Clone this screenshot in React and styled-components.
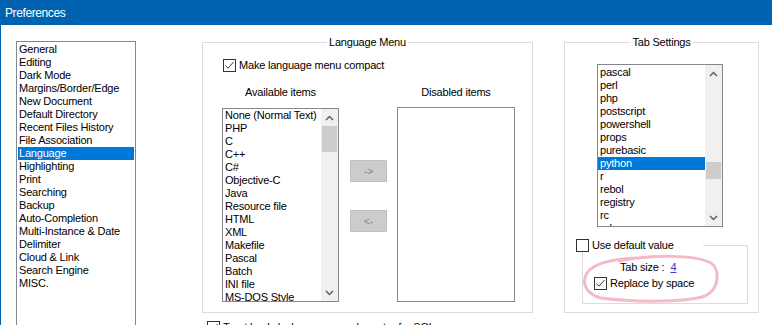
import React from 'react'
import styled, { createGlobalStyle } from 'styled-components'

const GlobalStyle = createGlobalStyle`
  html, body {
    margin: 0;
    padding: 0;
    background: #fff;
  }
  body {
    font-family: "Liberation Sans", Arial, sans-serif;
    font-size: 11px;
    letter-spacing: -0.2px;
    color: #000;
    overflow: hidden;
  }
`

const Window = styled.div`
  width: 772px;
  height: 325px;
  display: flex;
  flex-direction: column;
  overflow: hidden;
  background: #fff;
`

const TitleBar = styled.div`
  height: 25px;
  flex: none;
  box-sizing: border-box;
  background: #0063b1;
  color: #fff;
  font-size: 12px;
  letter-spacing: -0.4px;
  display: flex;
  align-items: center;
  padding-left: 5px;
`

const Body = styled.div`
  flex: 1;
  min-height: 0;
  border-left: 1px solid #0063b1;
  display: grid;
  grid-template-columns: 186px 362px 195px;
  grid-template-rows: auto 1fr;
  padding: 10px 0 0 15px;
`

const ListBox = styled.div`
  width: ${p => p.$w}px;
  height: ${p => p.$h}px;
  box-sizing: border-box;
  border: 1px solid #828790;
  background: #fff;
  display: flex;
  overflow: hidden;
  flex: none;
`

const CategoryBox = styled(ListBox)`
  grid-row: 1 / span 2;
  height: auto;
  align-self: stretch;
  margin: 6px 0 -20px;
`

const Items = styled.ul`
  flex: 1;
  min-width: 0;
  margin: 0;
  padding: ${p => p.$pad || '0'};
  list-style: none;
  overflow: hidden;
`

const Item = styled.li`
  height: 13px;
  line-height: 13px;
  padding-left: ${p => p.$indent || 2}px;
  white-space: nowrap;
  background: ${p => (p.$selected ? '#0078d7' : 'transparent')};
  color: ${p => (p.$selected ? '#fff' : '#000')};
`

const ScrollTrack = styled.div`
  width: 17px;
  flex: none;
  background: #f0f0f0;
  display: flex;
  flex-direction: column;
`

const ScrollArrow = styled.div`
  height: 17px;
  flex: none;
  display: flex;
  align-items: center;
  justify-content: center;
`

const ScrollSpace = styled.div`
  flex: ${p => (p.$fill ? 1 : 'none')};
  height: ${p => (p.$fill ? 'auto' : `${p.$h}px`)};
`

const Thumb = styled.div`
  flex: none;
  height: ${p => p.$h}px;
  margin: 0 1px;
  background: #cdcdcd;
`

const Group = styled.fieldset`
  margin: 0;
  min-width: 0;
  width: ${p => p.$w}px;
  box-sizing: border-box;
  border: 1px solid #dcdcdc;
  padding: 0;
  align-self: stretch;
`

const GroupInner = styled.div`
  padding: ${p => p.$pad};
`

const Legend = styled.legend`
  margin: 0 auto;
  padding: 0 2px;
  line-height: 14px;
  font-size: 11px;
`

const CheckRow = styled.label`
  display: flex;
  align-items: center;
  gap: ${p => p.$gap || 3}px;
  height: 13px;
  line-height: 13px;
  margin: ${p => p.$m || '0'};
  white-space: nowrap;
`

const Box = styled.span`
  width: 13px;
  height: 13px;
  box-sizing: border-box;
  border: 1px solid #333;
  background: #fff;
  display: inline-flex;
  align-items: center;
  justify-content: center;
  flex: none;
`

const ListsGrid = styled.div`
  display: grid;
  grid-template-columns: 128px 47px 118px;
  grid-template-rows: 13px auto;
  row-gap: 9px;
  margin-top: 14px;
`

const ColumnLabel = styled.div`
  line-height: 13px;
  text-align: center;
  width: ${p => p.$w}px;
  grid-column: ${p => p.$col};
  white-space: nowrap;
`

const ArrowColumn = styled.div`
  grid-column: 2;
  display: flex;
  flex-direction: column;
  gap: 28px;
  padding-top: 52px;
`

const MoveButton = styled.div`
  width: 37px;
  height: 22px;
  box-sizing: border-box;
  background: #cccccc;
  border: 1px solid #bfbfbf;
  color: #838383;
  font-size: 10px;
  display: flex;
  align-items: center;
  justify-content: center;
`

const DisabledList = styled(ListBox)`
  grid-column: 3;
  margin-top: -1px;
`

const TabList = styled(ListBox)`
  margin-left: 32px;
`

const SubGroup = styled.fieldset`
  margin: 12px 0 0 17px;
  padding: 9px 0 13px 0;
  width: 166px;
  min-width: 0;
  box-sizing: border-box;
  border: 1px solid #dcdcdc;
`

const SubLegend = styled.legend`
  margin-left: -7px;
  padding: 0;
  width: 127px;
  background: #fff;
`

const Annotated = styled.div`
  position: relative;
`

const TabSizeRow = styled.div`
  height: 13px;
  line-height: 13px;
  padding-left: 37px;
  white-space: nowrap;
`

const SizeLink = styled.span`
  margin-left: 6px;
  color: #3b3bd0;
  text-decoration: underline;
`

const Scribble = styled.svg`
  position: absolute;
  left: -4px;
  top: -8px;
  pointer-events: none;
  overflow: visible;
`

const BottomRow = styled.div`
  grid-column: 2;
  grid-row: 2;
`

const categories = [
  'General', 'Editing', 'Dark Mode', 'Margins/Border/Edge', 'New Document',
  'Default Directory', 'Recent Files History', 'File Association', 'Language',
  'Highlighting', 'Print', 'Searching', 'Backup', 'Auto-Completion',
  'Multi-Instance & Date', 'Delimiter', 'Cloud & Link', 'Search Engine', 'MISC.'
]

const available = [
  'None (Normal Text)', 'PHP', 'C', 'C++', 'C#', 'Objective-C', 'Java',
  'Resource file', 'HTML', 'XML', 'Makefile', 'Pascal', 'Batch', 'INI file',
  'MS-DOS Style'
]

const tabLangs = [
  'pascal', 'perl', 'php', 'postscript', 'powershell', 'props', 'purebasic',
  'python', 'r', 'rebol', 'registry', 'rc', 'ruby'
]

function Chevron ({ down }) {
  return (
    <svg width="9" height="6" viewBox="0 0 9 6">
      <polyline
        points={down ? '1,1 4.5,4.5 8,1' : '1,5 4.5,1.5 8,5'}
        fill="none"
        stroke="#606060"
        strokeWidth="1.5"
      />
    </svg>
  )
}

function ScrollBar ({ before, thumb }) {
  return (
    <ScrollTrack>
      <ScrollArrow><Chevron /></ScrollArrow>
      <ScrollSpace $h={before} />
      <Thumb $h={thumb} />
      <ScrollSpace $fill />
      <ScrollArrow><Chevron down /></ScrollArrow>
    </ScrollTrack>
  )
}

function CheckBox ({ checked }) {
  return (
    <Box>
      {checked && (
        <svg width="11" height="11" viewBox="0 0 11 11">
          <polyline points="1.5,5.5 4,8.2 9.5,2" fill="none" stroke="#3a3a3a" strokeWidth="1" />
        </svg>
      )}
    </Box>
  )
}

export default function App () {
  return (
    <Window>
      <GlobalStyle />
      <TitleBar>Preferences</TitleBar>
      <Body>
        <CategoryBox $w={120}>
          <Items $pad="1px 1px 0">
            {categories.map(c => (
              <Item key={c} $indent={1} $selected={c === 'Language'}>{c}</Item>
            ))}
          </Items>
        </CategoryBox>

        <Group $w={331}>
          <Legend>Language Menu</Legend>
          <GroupInner $pad="0 0 10px 19px">
            <CheckRow $m="10px 0 0 1px">
              <CheckBox checked />
              <span>Make language menu compact</span>
            </CheckRow>
            <ListsGrid>
              <ColumnLabel $col={1} $w={117}>Available items</ColumnLabel>
              <ColumnLabel $col={3} $w={118}>Disabled items</ColumnLabel>
              <ListBox $w={117} $h={194}>
                <Items>
                  {available.map(a => <Item key={a}>{a}</Item>)}
                </Items>
                <ScrollBar before={0} thumb={26} />
              </ListBox>
              <ArrowColumn>
                <MoveButton>-&gt;</MoveButton>
                <MoveButton>&lt;-</MoveButton>
              </ArrowColumn>
              <DisabledList $w={118} $h={195} />
            </ListsGrid>
          </GroupInner>
        </Group>

        <Group $w={195}>
          <Legend>Tab Settings</Legend>
          <GroupInner $pad="15px 0 8px 0">
            <TabList $w={126} $h={163}>
              <Items $pad="1px 0 0">
                {tabLangs.map(l => (
                  <Item key={l} $selected={l === 'python'}>{l}</Item>
                ))}
              </Items>
              <ScrollBar before={80} thumb={17} />
            </TabList>
            <SubGroup>
              <SubLegend>
                <CheckRow $gap={3}>
                  <CheckBox />
                  <span>Use default value</span>
                </CheckRow>
              </SubLegend>
              <Annotated>
                <TabSizeRow>
                  Tab size :<SizeLink>4</SizeLink>
                </TabSizeRow>
                <CheckRow $m="3px 0 0 11px">
                  <CheckBox checked />
                  <span>Replace by space</span>
                </CheckRow>
                <Scribble width="150" height="56" viewBox="0 0 150 56">
                  <path
                    d="M 40 8 C 70 2, 115 1, 132 10 C 141 16, 141 36, 126 43 C 104 50, 52 49, 22 45 C 7 41, 2 30, 8 20 C 14 11, 32 6, 58 5"
                    fill="none"
                    stroke="rgba(236, 120, 140, 0.5)"
                    strokeWidth="3"
                    strokeLinecap="round"
                  />
                </Scribble>
              </Annotated>
            </SubGroup>
          </GroupInner>
        </Group>

        <BottomRow>
          <CheckRow $m="8px 0 0 5px">
            <CheckBox checked />
            <span>Treat backslash as escape character for SQL</span>
          </CheckRow>
        </BottomRow>
      </Body>
    </Window>
  )
}
